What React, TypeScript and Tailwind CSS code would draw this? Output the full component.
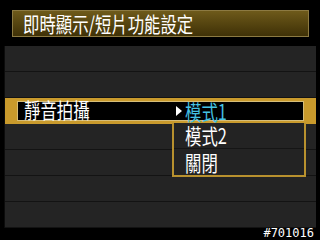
import React from 'react';

const cjk = { fontFamily: '"Noto Sans CJK TC", "Noto Sans CJK SC", "Noto Sans", sans-serif' };

const Label: React.FC<{ text: string; className?: string }> = ({ text, className = 'text-white' }) => (
  <span className={`inline-block origin-left scale-x-[0.78] text-[21px] leading-none whitespace-nowrap ${className}`}>
    {text}
  </span>
);

const App: React.FC = () => {
  const rows = [0, 1, 2, 3, 4, 5, 6];

  return (
    <div className="relative w-[320px] h-[240px] bg-black overflow-hidden" style={cjk}>
      {/* Title */}
      <div className="pt-[10px] pl-[12px]">
        <div className="w-[297px] h-[27px] flex items-center pl-[10px] border border-[#8c7a42] bg-gradient-to-b from-[#6e5a1a] to-[#3f3107]">
          <Label text="即時顯示/短片功能設定" />
        </div>
      </div>

      {/* Menu rows */}
      <div className="mt-[9px] ml-[4px] w-[312px] border-l border-[#0c0c0c]">
        {rows.map((i) =>
          i === 2 ? (
            <div key={i} className="h-[26px] bg-[#c99a2c] pl-[12px] pr-[12px] py-[3px]">
              <div className="h-full flex items-center bg-black border border-[#d6bd78]">
                <div className="w-[155px] pl-[6px]">
                  <Label text="靜音拍攝" />
                </div>
                <div className="w-[12px] flex items-center pl-[3px]">
                  <svg width="6" height="10" viewBox="0 0 6 10">
                    <path d="M0 0 L6 5 L0 10 Z" fill="#ffffff" />
                  </svg>
                </div>
                <Label text="模式1" className="text-[#45c2e4]" />
              </div>
            </div>
          ) : (
            <div key={i} className="h-[26px] bg-[#242424] border-b border-[#131313]" />
          )
        )}
      </div>

      {/* Option list */}
      <div className="absolute left-[172px] top-[123px] w-[134px] border-x-2 border-b-2 border-[#b8912e] bg-[#232323]">
        <div className="h-[26px] flex items-center pl-[11px] border-b border-[#151515]">
          <Label text="模式2" />
        </div>
        <div className="h-[26px] flex items-center pl-[11px]">
          <Label text="關閉" />
        </div>
      </div>

      <div
        className="-mt-[1px] pr-[6px] text-right text-white text-[12px] leading-[12px]"
        style={{ fontFamily: '"DejaVu Sans Mono", monospace' }}
      >
        #701016
      </div>
    </div>
  );
};

export default App;
